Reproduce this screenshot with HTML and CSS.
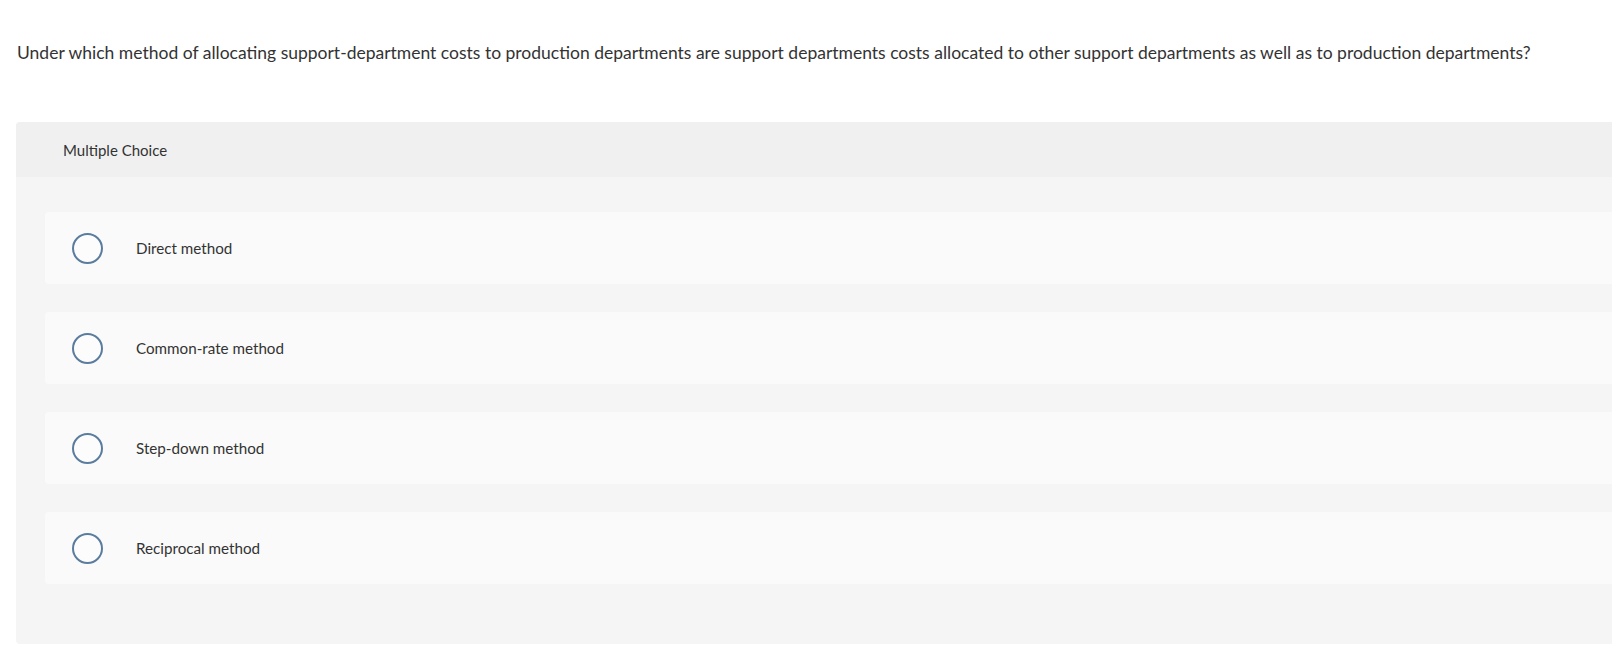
FILE: index.html
```html
<!DOCTYPE html>
<html lang="en">
<head>
    <meta charset="UTF-8">
    <meta name="viewport" content="width=device-width, initial-scale=1.0">
    <title>Question</title>
    <link rel="stylesheet" href="styles.css">
</head>
<body>
    <p class="question">Under which method of allocating support-department costs to production departments are support departments costs allocated to other support departments as well as to production departments?</p>
    <div class="answer-panel">
        <div class="answer-panel_header">Multiple Choice</div>
        <div class="answer-panel_body">
            <label class="choice">
                <span class="choice_radio"></span>
                <span class="choice_text">Direct method</span>
            </label>
            <label class="choice">
                <span class="choice_radio"></span>
                <span class="choice_text">Common-rate method</span>
            </label>
            <label class="choice">
                <span class="choice_radio"></span>
                <span class="choice_text">Step-down method</span>
            </label>
            <label class="choice">
                <span class="choice_radio"></span>
                <span class="choice_text">Reciprocal method</span>
            </label>
        </div>
    </div>
</body>
</html>
```

FILE: styles.css
```css
body {
    margin: 0;
    background-color: #fff;
    font-family: Lato, "Open Sans", sans-serif;
    color: #333;
    overflow: hidden;
}
.question {
    margin: 0;
    padding: 42px 0 0 17px;
    height: 80px;
    font-size: 17.5px;
    line-height: 22px;
}
.answer-panel {
    margin-left: 16px;
    background-color: #f5f5f5;
    border-radius: 4px 0 0 4px;
}
.answer-panel_header {
    height: 55px;
    display: flex;
    align-items: center;
    padding-left: 47px;
    background-color: #f0f0f0;
    border-radius: 4px 0 0 0;
    font-size: 15px;
}
.answer-panel_body {
    display: flex;
    flex-direction: column;
    gap: 28px;
    padding: 35px 0 60px 29px;
}
.choice {
    height: 72px;
    display: flex;
    align-items: center;
    background-color: #fafafa;
    border-radius: 4px 0 0 4px;
    padding-left: 27px;
    font-size: 15.2px;
}
.choice_radio {
    width: 27px;
    height: 27px;
    border: 2px solid #5a7c9e;
    border-radius: 50%;
    background-color: #fcfcfc;
}
.choice_text {
    margin-left: 33px;
}
```
